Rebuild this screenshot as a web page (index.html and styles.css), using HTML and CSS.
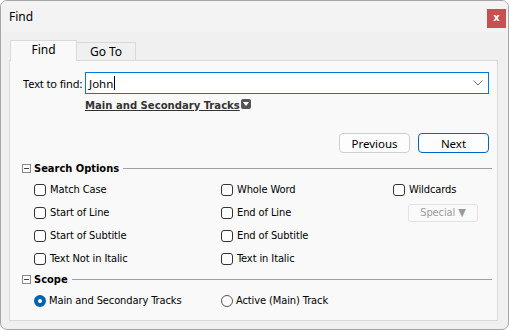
FILE: index.html
```html
<!DOCTYPE html>
<html>
 <head>
  <title>Find</title>
  <meta charset="utf-8" />
  <link rel="stylesheet" href="styles.css">
 </head>
 <body>
  <div class="window">
   <div class="titlebar">
    <span class="title">Find</span>
    <span class="close">x</span>
   </div>
   <div class="content">
    <div class="tabs">
     <div class="tab active">Find</div>
     <div class="tab">Go To</div>
    </div>
    <div class="panel">
     <div class="find-row">
      <span class="label">Text to find:</span>
      <div class="combo">
       <span class="value">John</span><span class="caret"></span>
       <svg class="chevron" width="10" height="6" viewBox="0 0 10 6"><polyline points="0.5,0.5 5,5 9.5,0.5" fill="none" stroke="#777" stroke-width="1"/></svg>
      </div>
     </div>
     <div class="scope-link">
      <span class="link">Main and Secondary Tracks</span>
      <span class="drop-icon"><svg width="10" height="10" viewBox="0 0 10 10"><polygon points="2,3 8,3 5,7" fill="#fff"/></svg></span>
     </div>
     <div class="buttons">
      <button class="btn">Previous</button>
      <button class="btn default">Next</button>
     </div>

     <div class="group-head">
      <span class="collapse"></span>
      <span class="group-title">Search Options</span>
      <span class="rule"></span>
     </div>
     <div class="options">
      <label class="opt"><span class="box"></span>Match Case</label>
      <label class="opt"><span class="box"></span>Whole Word</label>
      <label class="opt"><span class="box"></span>Wildcards</label>
      <label class="opt"><span class="box"></span>Start of Line</label>
      <label class="opt"><span class="box"></span>End of Line</label>
      <div class="opt"><span class="special">Special &#9660;</span></div>
      <label class="opt"><span class="box"></span>Start of Subtitle</label>
      <label class="opt"><span class="box"></span>End of Subtitle</label>
      <div class="opt"></div>
      <label class="opt"><span class="box"></span>Text Not in Italic</label>
      <label class="opt"><span class="box"></span>Text in Italic</label>
      <div class="opt"></div>
     </div>

     <div class="group-head scope-head">
      <span class="collapse"></span>
      <span class="group-title">Scope</span>
      <span class="rule"></span>
     </div>
     <div class="radios">
      <label class="opt"><span class="radio on"></span>Main and Secondary Tracks</label>
      <label class="opt"><span class="radio"></span>Active (Main) Track</label>
     </div>
    </div>
   </div>
  </div>
 </body>
</html>
```

FILE: styles.css
```css
html, body {margin: 0; padding: 0; background: #ffffff;}
body {font-family: "Segoe UI", "Noto Sans", "Liberation Sans", sans-serif; font-size: 12px; color: #000;}

.window {width: 507px; height: 328px; border: 1px solid #a6a6a6; border-radius: 7px; background: #f0f0f0; overflow: hidden;}

.titlebar {height: 31px; background: #f3f3f3; display: flex; align-items: center; justify-content: space-between; padding: 0 1px 0 8px;}
.title {font-size: 12px; margin-top: -1px;}
.close {width: 19px; height: 19px; margin-top: 4px; margin-right: 1px; background: #c75050; color: #fff; font-family: "DejaVu Sans", sans-serif; font-weight: bold; font-size: 10px; line-height: 17px; text-align: center;}

.content {padding: 8px 10px 0 8px;}

.tabs {display: flex; align-items: flex-end; height: 20px; margin-left: 1px; position: relative; z-index: 2;}
.tab {height: 18px; box-sizing: border-box; border: 1px solid #d9d9d9; border-bottom: none; background: #f0f0f0; text-align: center; line-height: 17px; width: 60px; margin-left: -1px;}
.tab.active {height: 21px; width: 67px; background: #f9f9f9; margin-left: 0; margin-bottom: -1px; line-height: 18px; z-index: 3;}

.panel {height: 259px; border: 1px solid #d9d9d9; background: #f9f9f9; padding: 0 8px 0 12px; position: relative; z-index: 1;}

.find-row {display: flex; align-items: center; margin-top: 11px; height: 22px;}
.label {width: 62px; flex-shrink: 0; padding-left: 1px; white-space: nowrap; font-size: 11px; letter-spacing: -0.1px;}
.combo {flex: 1; height: 22px; box-sizing: border-box; border: 1px solid #0078d7; background: #fff; display: flex; align-items: center; padding-left: 3px;}
.value {font-size: 11.5px;}
.caret {width: 1px; height: 14px; background: #000; margin-left: 1px;}
.chevron {margin-left: auto; margin-right: 5px;}

.scope-link {display: flex; align-items: center; margin: 3px 0 0 63px; height: 16px;}
.link {font-family: "DejaVu Sans", sans-serif; font-stretch: condensed; font-weight: bold; font-size: 11.2px; color: #333; text-decoration: underline;}
.drop-icon {width: 10px; height: 10px; background: #555; border-radius: 2px; display: flex; margin-left: 1px; margin-top: -3px;}

.buttons {display: flex; justify-content: flex-end; gap: 8px; margin-top: 20px;}
.btn {width: 71px; height: 20px; box-sizing: border-box; border: 1px solid #cfcfcf; border-radius: 4px; background: #fdfdfd; font-family: inherit; font-size: 11.5px; padding: 0; color: #000;}
.btn.default {border-color: #0067c0;}

.group-head {display: flex; align-items: center; height: 14px; margin-top: 8px; margin-right: -3px;}
.collapse {width: 7px; height: 7px; border: 1px solid #888; position: relative; background: #fff; margin-top: 1px;}
.collapse::after {content: ""; position: absolute; left: 1px; top: 3px; width: 5px; height: 1px; background: #444;}
.group-title {font-family: "DejaVu Sans", sans-serif; font-stretch: condensed; font-weight: bold; font-size: 11px; margin-left: 3px;}
.rule {flex: 1; height: 1px; background: #a0a0a0; margin-left: 4px;}

.options {display: grid; grid-template-columns: 187px 172px 1fr; grid-auto-rows: 23px; margin: 3px 0 0 12px;}
.opt {display: flex; align-items: center; font-family: "DejaVu Sans", sans-serif; font-stretch: condensed; font-size: 11px; letter-spacing: -0.1px; color: #000;}
.box {width: 12px; height: 12px; box-sizing: border-box; border: 1px solid #333; border-radius: 3px; background: #fff; margin-right: 4px;}
.special {margin-left: 15px; width: 70px; height: 18px; box-sizing: border-box; border: 1px solid #e3e3e3; border-radius: 3px; background: #fafafa; color: #9a9a9a; text-align: center; line-height: 16px;}

.scope-head {margin-top: 2px;}
.radios {display: grid; grid-template-columns: 187px 1fr; grid-auto-rows: 23px; margin: 3px 0 0 12px;}
.radio {width: 12px; height: 12px; box-sizing: border-box; border: 1px solid #555; border-radius: 50%; background: #fff; margin-right: 3px;}
.radio.on {border: 4px solid #0063b1;}
```
